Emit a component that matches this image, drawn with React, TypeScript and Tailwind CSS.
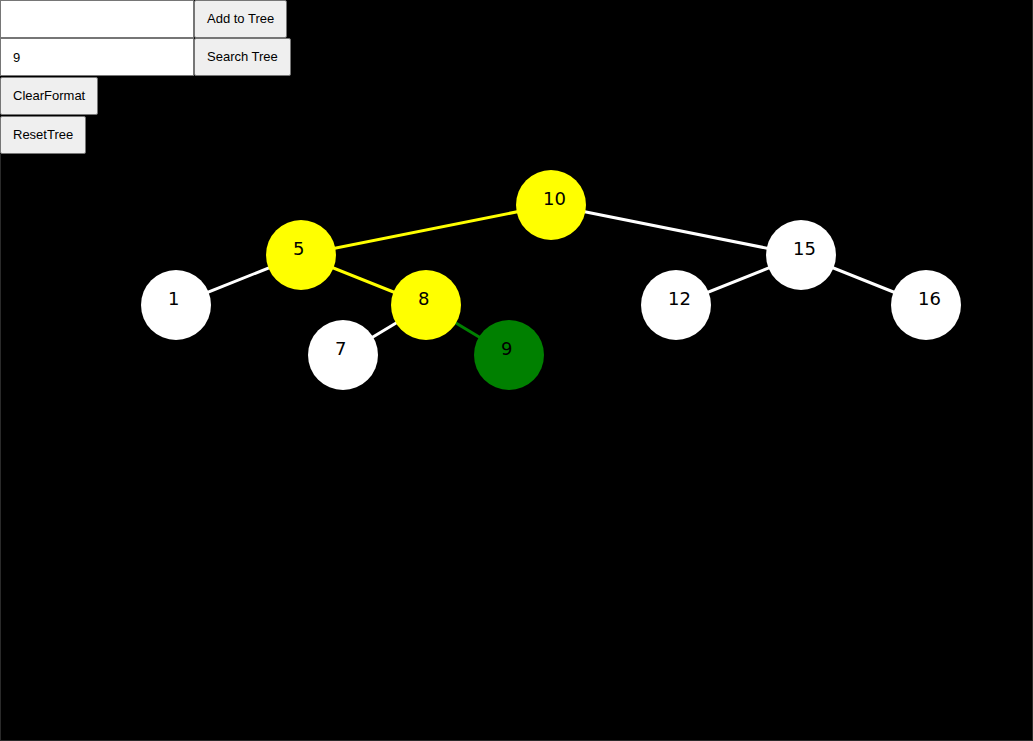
import React from "react";

type Node = { id: number; x: number; y: number; fill: string };

const nodes: Node[] = [
  { id: 10, x: 551, y: 205, fill: "#ffff00" },
  { id: 5, x: 301, y: 255, fill: "#ffff00" },
  { id: 15, x: 801, y: 255, fill: "#ffffff" },
  { id: 1, x: 176, y: 305, fill: "#ffffff" },
  { id: 8, x: 426, y: 305, fill: "#ffff00" },
  { id: 12, x: 676, y: 305, fill: "#ffffff" },
  { id: 16, x: 926, y: 305, fill: "#ffffff" },
  { id: 7, x: 343, y: 355, fill: "#ffffff" },
  { id: 9, x: 509, y: 355, fill: "#008000" },
];

const edges: [number, number, string][] = [
  [10, 5, "#ffff00"],
  [10, 15, "#ffffff"],
  [5, 1, "#ffffff"],
  [5, 8, "#ffff00"],
  [15, 12, "#ffffff"],
  [15, 16, "#ffffff"],
  [8, 7, "#ffffff"],
  [8, 9, "#008000"],
];

// canvas starts below the controls, 1px in from the left border
const TOP = 154;
const LEFT = 1;

function pos(id: number) {
  const n = nodes.find((n) => n.id === id)!;
  return { x: n.x - LEFT, y: n.y - TOP };
}

export default function App() {
  const btn =
    "h-[38px] bg-[#efefef] border border-[#767676] rounded-[2px] px-3 text-[13px] text-black";
  const input =
    "h-[38px] w-[194px] bg-white border border-[#767676] px-3 text-[13px] text-black outline-none";

  return (
    <div
      className="w-[1033px] h-[741px] bg-black border-r border-b border-[#2a2a2a] flex flex-col overflow-hidden"
      style={{ fontFamily: "Arial, 'Liberation Sans', sans-serif" }}
    >
      {/* Controls */}
      <div className="flex flex-col items-start">
        <div className="flex">
          <input className={input} defaultValue="" />
          <button className={btn}>Add to Tree</button>
        </div>
        <div className="flex">
          <input className={input} defaultValue="9" />
          <button className={btn}>Search Tree</button>
        </div>
        <button className={`${btn} mt-px`}>ClearFormat</button>
        <button className={`${btn} mt-px`}>ResetTree</button>
      </div>

      {/* Tree canvas */}
      <svg width={1032} height={586} className="block border-l border-[#2a2a2a]">
        {edges.map(([a, b, c]) => {
          const p = pos(a);
          const q = pos(b);
          return (
            <line
              key={`${a}-${b}`}
              x1={p.x}
              y1={p.y}
              x2={q.x}
              y2={q.y}
              stroke={c}
              strokeWidth={3}
            />
          );
        })}
        {nodes.map((n) => {
          const p = pos(n.id);
          return (
            <g key={n.id}>
              <circle cx={p.x} cy={p.y} r={35} fill={n.fill} />
              <text
                x={p.x - 8}
                y={p.y}
                fontSize={18}
                fill="#000"
                style={{ fontFamily: "'DejaVu Sans', Verdana, sans-serif" }}
              >
                {n.id}
              </text>
            </g>
          );
        })}
      </svg>
    </div>
  );
}
